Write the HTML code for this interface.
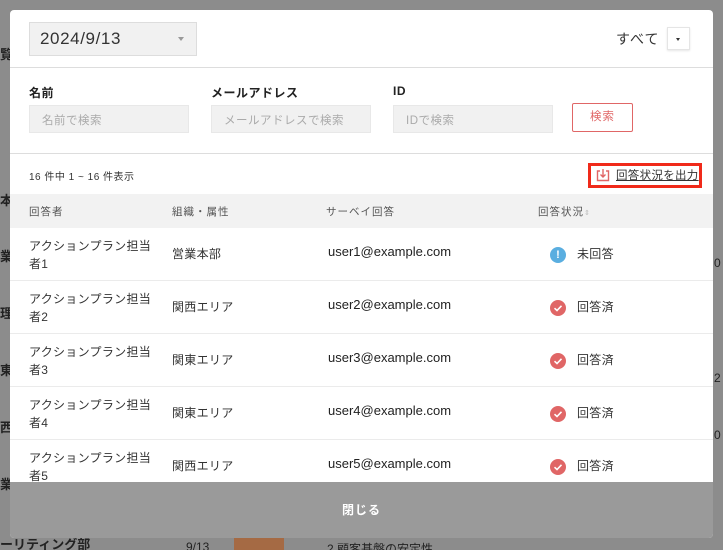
<!DOCTYPE html>
<html><head><meta charset="utf-8"><style>
*{box-sizing:border-box;margin:0;padding:0}
html,body{width:723px;height:550px;overflow:hidden}
body{background:#8c8c8c;font-family:"Liberation Sans","Noto Sans CJK JP",sans-serif;position:relative;color:#333}
.bgt{position:absolute;color:#222;font-size:13px;font-weight:bold}
.modal{position:absolute;left:10px;top:10px;width:703px;height:528px;background:#fff;border-radius:4px;overflow:hidden}
.abs{position:absolute}
.lbl{font-size:12px;font-weight:bold;color:#222;letter-spacing:.5px}
.inp{position:absolute;height:28px;background:#f1f1f1;border:1px solid #e8e8e8;font-size:11.5px;color:#aaa;padding:6px 12px;letter-spacing:.5px}
.row{position:absolute;left:0;width:703px;height:53px;border-bottom:1px solid #ebebeb;font-size:12px;color:#333;letter-spacing:.3px}
.row .c1{position:absolute;left:19px;top:9px;line-height:18px;width:126px}
.row .c2{position:absolute;left:162px;top:17px}
.row .c3{position:absolute;left:318px;top:16px;font-size:13px;color:#222;letter-spacing:0}
.row .ic{position:absolute;left:540px;top:19px;width:16px;height:16px;border-radius:50%;background:#e06666}
.row .st{position:absolute;left:567px;top:17px}
.foot{position:absolute;left:0;top:472px;width:703px;height:56px;background:#9a9a9a;color:#fff;font-size:12px;font-weight:bold;text-align:center;line-height:56px;letter-spacing:1px}
</style></head><body>
<div class="bgt" style="left:0;top:44px">覧</div>
<div class="bgt" style="left:0;top:190px">本</div>
<div class="bgt" style="left:0;top:246px">業</div>
<div class="bgt" style="left:0;top:303px">理</div>
<div class="bgt" style="left:0;top:360px">東</div>
<div class="bgt" style="left:0;top:417px">西</div>
<div class="bgt" style="left:0;top:474px">業</div>
<div class="bgt" style="left:0;top:534px">ーリティング部</div>
<div class="abs" style="left:186px;top:540px;font-size:12px;color:#222">9/13</div>
<div class="abs" style="left:234px;top:538px;width:50px;height:14px;background:#a56a44"></div>
<div class="abs" style="left:327px;top:540px;font-size:12px;color:#222">2.顧客基盤の安定性</div>
<div class="abs" style="left:714px;top:256px;font-size:12px;color:#222">0</div>
<div class="abs" style="left:714px;top:371px;font-size:12px;color:#222">2</div>
<div class="abs" style="left:714px;top:428px;font-size:12px;color:#222">0</div>
<div class="modal">
  <div class="abs" style="left:19px;top:12px;width:168px;height:34px;background:#f1f1f1;border:1px solid #ddd;font-size:17px;color:#333;padding:6px 10px;letter-spacing:.6px">2024/9/13</div>
  <div class="abs" style="left:168px;top:27px;border:3px solid transparent;border-top:4px solid #999"></div>
  <div class="abs" style="left:606px;top:19px;font-size:14px;color:#333;letter-spacing:1px">すべて</div>
  <div class="abs" style="left:657px;top:17px;width:23px;height:23px;border:1px solid #e5e5e5;box-shadow:0 1px 2px rgba(0,0,0,.1)"></div>
  <div class="abs" style="left:666px;top:28px;border:2.5px solid transparent;border-top:3px solid #333"></div>
  <div class="abs" style="left:0;top:57px;width:703px;border-top:1px solid #ddd"></div>
  <div class="abs lbl" style="left:19px;top:74px">名前</div>
  <div class="abs lbl" style="left:201px;top:74px">メールアドレス</div>
  <div class="abs lbl" style="left:383px;top:74px">ID</div>
  <div class="inp" style="left:19px;top:95px;width:160px">名前で検索</div>
  <div class="inp" style="left:201px;top:95px;width:160px">メールアドレスで検索</div>
  <div class="inp" style="left:383px;top:95px;width:160px">IDで検索</div>
  <div class="abs" style="left:562px;top:93px;width:61px;height:29px;border:1px solid #e06666;border-radius:2px;color:#e06666;font-size:11.5px;text-align:center;line-height:27px;letter-spacing:1px">検索</div>
  <div class="abs" style="left:0;top:143px;width:703px;border-top:1px solid #ddd"></div>
  <div class="abs" style="left:19px;top:158px;font-size:10px;color:#333;letter-spacing:.5px">16 件中 1 ~ 16 件表示</div>
  <div class="abs" style="left:578px;top:153px;width:114px;height:25px;border:3px solid #f02a1a"></div>
  <svg class="abs" style="left:586px;top:158px" width="14" height="14" viewBox="0 0 14 14"><path d="M4 3H1.5V12.5H12.5V3H10M7 1V9M4.5 6.5L7 9L9.5 6.5" fill="none" stroke="#e06666" stroke-width="1.4"/></svg>
  <div class="abs" style="left:606px;top:157px;font-size:11.5px;color:#333;text-decoration:underline;letter-spacing:.3px">回答状況を出力</div>
  <div class="abs" style="left:0;top:184px;width:703px;height:34px;background:#f2f2f2;font-size:10.5px;color:#555;letter-spacing:1px">
    <span class="abs" style="left:19px;top:10px">回答者</span>
    <span class="abs" style="left:162px;top:10px">組織・属性</span>
    <span class="abs" style="left:316px;top:10px">サーベイ回答</span>
    <span class="abs" style="left:528px;top:10px">回答状況<span style="color:#bbb;font-size:7px">⇕</span></span>
  </div>
  <div class="row" style="top:218px"><div class="c1">アクションプラン担当者1</div><div class="c2">営業本部</div><div class="c3">user1@example.com</div><div class="ic" style="background:#5aaee0;color:#fff;font-size:11px;font-weight:bold;text-align:center;line-height:16px;letter-spacing:0">!</div><div class="st">未回答</div></div>
  <div class="row" style="top:271px"><div class="c1">アクションプラン担当者2</div><div class="c2">関西エリア</div><div class="c3">user2@example.com</div><svg class="ic" viewBox="0 0 16 16"><path d="M4.5 8.2L7 10.5L11.5 5.8" fill="none" stroke="#fff" stroke-width="1.6"/></svg><div class="st">回答済</div></div>
  <div class="row" style="top:324px"><div class="c1">アクションプラン担当者3</div><div class="c2">関東エリア</div><div class="c3">user3@example.com</div><svg class="ic" viewBox="0 0 16 16"><path d="M4.5 8.2L7 10.5L11.5 5.8" fill="none" stroke="#fff" stroke-width="1.6"/></svg><div class="st">回答済</div></div>
  <div class="row" style="top:377px"><div class="c1">アクションプラン担当者4</div><div class="c2">関東エリア</div><div class="c3">user4@example.com</div><svg class="ic" viewBox="0 0 16 16"><path d="M4.5 8.2L7 10.5L11.5 5.8" fill="none" stroke="#fff" stroke-width="1.6"/></svg><div class="st">回答済</div></div>
  <div class="row" style="top:430px"><div class="c1">アクションプラン担当者5</div><div class="c2">関西エリア</div><div class="c3">user5@example.com</div><svg class="ic" viewBox="0 0 16 16"><path d="M4.5 8.2L7 10.5L11.5 5.8" fill="none" stroke="#fff" stroke-width="1.6"/></svg><div class="st">回答済</div></div>
  <div class="foot">閉じる</div>
</div>
</body></html>
